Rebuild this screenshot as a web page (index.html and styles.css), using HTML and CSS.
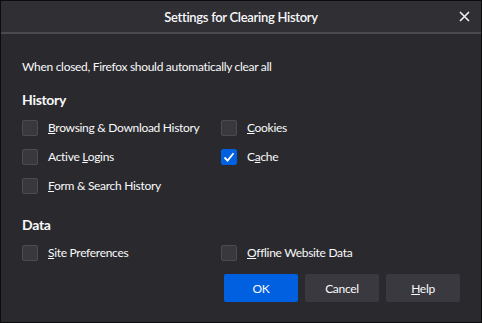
FILE: index.html
```html
<!DOCTYPE html>
<html lang="en">

<head>
    <meta charset="UTF-8">
    <title>Settings for Clearing History</title>
    <link rel="stylesheet" href="styles.css">
</head>

<body>
    <div class="dialog">
        <!-- Title bar -->
        <div class="titlebar">
            <span class="title">Settings for Clearing History</span>
            <span class="close">
                <svg width="11" height="11" viewBox="0 0 11 11">
                    <path d="M1 1 L10 10 M10 1 L1 10" stroke="#f0f0f4" stroke-width="1.6" />
                </svg>
            </span>
        </div>

        <div class="content">
            <p class="intro">When closed, Firefox should automatically clear all</p>

            <!-- History Section -->
            <h2>History</h2>
            <div class="grid">
                <label class="item"><span class="box"></span><span><u>B</u>rowsing &amp; Download History</span></label>
                <label class="item"><span class="box"></span><span><u>C</u>ookies</span></label>
                <label class="item"><span class="box"></span><span>Active <u>L</u>ogins</span></label>
                <label class="item"><span class="box checked">
                        <svg width="16" height="16" viewBox="0 0 16 16">
                            <path d="M3.5 8.5 L6.6 11.6 L12.5 4.2" fill="none" stroke="#fff" stroke-width="1.8" />
                        </svg>
                    </span><span>C<u>a</u>che</span></label>
                <label class="item"><span class="box"></span><span><u>F</u>orm &amp; Search History</span></label>
            </div>

            <!-- Data Section -->
            <h2 class="data">Data</h2>
            <div class="grid">
                <label class="item"><span class="box"></span><span><u>S</u>ite Preferences</span></label>
                <label class="item"><span class="box"></span><span><u>O</u>ffline Website Data</span></label>
            </div>

            <div class="buttons">
                <button class="primary">OK</button>
                <button>Cancel</button>
                <button><u>H</u>elp</button>
            </div>
        </div>
    </div>
</body>

</html>
```

FILE: styles.css
```css
body {
    margin: 0;
    font-family: Lato, "Noto Sans", sans-serif;
    letter-spacing: -0.3px;
    background-color: #0c0c0d;
    color: #f9f9fa;
}

.dialog {
    width: 480px;
    height: 321px;
    margin: 1px;
    background-color: #2a2a2e;
    display: flex;
    flex-direction: column;
}

.titlebar {
    height: 31px;
    border-bottom: 2px solid #4a4a50;
    background-color: #2f2f34;
    display: flex;
    align-items: center;
    justify-content: center;
    position: relative;
}

.title {
    font-size: 13px;
    font-weight: 600;
}

.close {
    position: absolute;
    right: 11px;
    top: 10px;
    display: flex;
}

.content {
    padding: 0 21px;
}

.intro {
    margin: 24px 0 0;
    font-size: 12px;
    line-height: 18px;
}

h2 {
    margin: 14px 0 9px;
    font-size: 14px;
    font-weight: 700;
    line-height: 20px;
}

h2.data {
    margin-top: 20px;
    margin-bottom: 9px;
}

.grid {
    display: grid;
    grid-template-columns: 199px 1fr;
    row-gap: 11px;
}

.item {
    display: flex;
    align-items: center;
    gap: 10px;
    font-size: 12px;
    line-height: 18px;
}

.box {
    width: 16px;
    height: 16px;
    box-sizing: border-box;
    border: 1px solid #4c4b52;
    border-radius: 2px;
    background-color: #38383d;
    display: flex;
}

.box.checked {
    background-color: #0061e0;
    border-color: #0061e0;
}

.box.checked svg {
    margin: -1px;
}

.buttons {
    display: flex;
    justify-content: flex-end;
    gap: 7px;
    margin-top: 12px;
}

button {
    width: 74px;
    height: 28px;
    border: none;
    border-radius: 2px;
    background-color: #3a393f;
    color: #f9f9fa;
    font-family: inherit;
    letter-spacing: inherit;
    font-size: 12px;
    padding: 0;
}

button.primary {
    background-color: #0060df;
}
```
